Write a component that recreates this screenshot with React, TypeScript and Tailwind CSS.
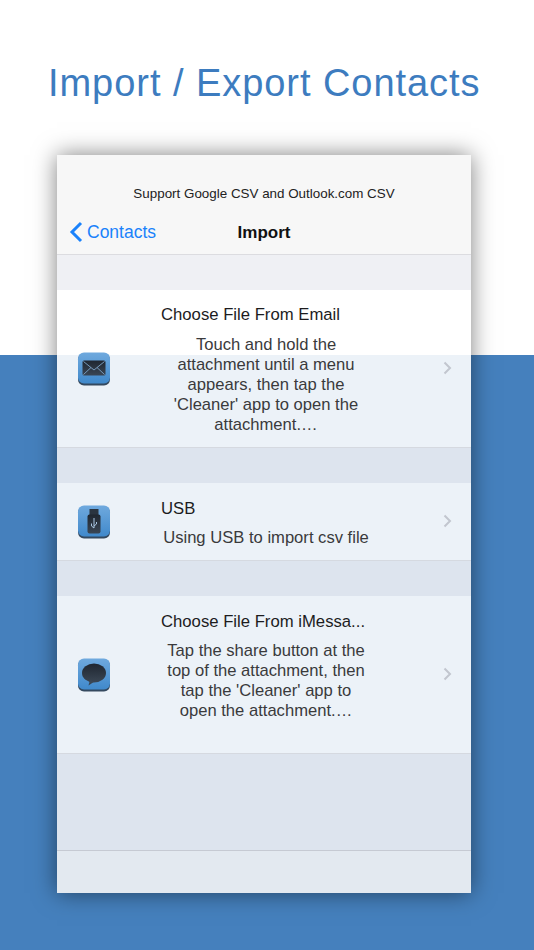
import React from 'react';

const IconTile = ({ children }: { children: React.ReactNode }) => (
  <svg width="34" height="34" viewBox="0 0 34 34" className="shrink-0">
    <defs>
      <linearGradient id="tile" x1="0" y1="0" x2="0" y2="1">
        <stop offset="0" stopColor="#6fa9de" />
        <stop offset="1" stopColor="#4089cb" />
      </linearGradient>
      <linearGradient id="glyph" x1="0" y1="0" x2="0" y2="1">
        <stop offset="0" stopColor="#1f2630" />
        <stop offset="1" stopColor="#3a4654" />
      </linearGradient>
    </defs>
    <rect x="1" y="1.500" width="32" height="32" rx="6" fill="#34495f" />
    <rect x="1" y="0.500" width="32" height="31" rx="6" fill="url(#tile)" />
    {children}
  </svg>
);

const MailIcon = () => (
  <IconTile>
    <rect x="5.500" y="8.500" width="23" height="15" rx="1.500" fill="url(#glyph)" />
    <path d="M6.500 9.500 17 18l10.500-8.500M6.500 22.500l7.500-7M27.500 22.500l-7.500-7" fill="none" stroke="#7fa6c9" strokeWidth="0.900" />
  </IconTile>
);

const UsbIcon = () => (
  <IconTile>
    <rect x="12.500" y="4" width="9" height="6" fill="#2a3440" />
    <rect x="10.500" y="9.500" width="13" height="19" rx="2" fill="url(#glyph)" />
    <path d="M17 13v10M17 23l-2.500-2v-2.500M17 21l2.500-2v-2" fill="none" stroke="#a9c6e2" strokeWidth="1" />
  </IconTile>
);

const ChatIcon = () => (
  <IconTile>
    <ellipse cx="17" cy="15" rx="12" ry="9.500" fill="url(#glyph)" />
    <path d="M13 22l-1.500 5.500 6-4z" fill="#3a4654" />
  </IconTile>
);

const Chevron = () => (
  <svg width="9" height="14" viewBox="0 0 9 14" className="shrink-0 mb-[2px]">
    <path d="M1.500 1.500 7 7l-5.500 5.500" fill="none" stroke="#c2c6cf" strokeWidth="2" />
  </svg>
);

type RowProps = {
  icon: React.ReactNode;
  title: string;
  lines: string[];
  tall?: boolean;
  tight?: boolean;
};

const Row = ({ icon, title, lines, tall, tight }: RowProps) => (
  <div className={`flex items-center bg-white/90 border-b border-[#d5d9e0] pl-[20px] pr-[19px] ${tall ? 'h-[158px]' : 'h-[78px]'}`}>
    <div className="w-[84px] shrink-0">{icon}</div>
    <div className={`flex-1 min-w-0 self-start ${tight ? 'pt-[16px]' : 'pt-[15px]'}`}>
      <div className="text-[16.700px] leading-[20px] text-[#1c1c1e]">{title}</div>
      <div className={`text-[16.600px] leading-[20px] text-[#3a3a3c] text-center w-[210px] ${tight ? 'mt-[9px]' : 'mt-[10px]'}`}>
        {lines.map((line) => (
          <div key={line} className="whitespace-nowrap">{line}</div>
        ))}
      </div>
    </div>
    <Chevron />
  </div>
);

const App: React.FC = () => {
  return (
    <div className="relative w-[534px] h-[950px] flex flex-col overflow-hidden font-['Liberation_Sans',sans-serif]">
      <div className="h-[355px] bg-white px-[48px] pt-[58px]">
        <h1 className="text-[38px] leading-[50px] tracking-[0.950px] whitespace-nowrap text-[#3d7cbf]">
          Import / Export Contacts
        </h1>
      </div>
      <div className="flex-1 bg-[#4580bd]" />

      <div className="absolute left-[57px] top-[155px] w-[414px] h-[738px] flex flex-col shadow-[0_0_22px_rgba(0,0,0,0.5)]">
        <div className="h-[100px] bg-[#f7f7f7] border-b border-[#dcdce0] flex flex-col items-center relative">
          <div className="mt-[30px] text-[13.400px] leading-[17px] text-[#222]">Support Google CSV and Outlook.com CSV</div>
          <div className="mt-[20px] text-[17px] leading-[22px] font-bold text-[#111]">Import</div>
          <div className="absolute left-[12px] top-[66px] flex items-center gap-[4px] text-[#1a82fb] text-[17.500px] leading-[22px]">
            <svg width="14" height="22" viewBox="0 0 14 22">
              <path d="M12 2 3 11l9 9" fill="none" stroke="#1a82fb" strokeWidth="3" />
            </svg>
            <span>Contacts</span>
          </div>
        </div>
        <div className="h-[35px] bg-[#edeef3]/90" />
        <Row
          tall
          icon={<MailIcon />}
          title="Choose File From Email"
          lines={['Touch and hold the', 'attachment until a menu', 'appears, then tap the', "'Cleaner' app to open the", 'attachment.…']}
        />
        <div className="h-[35px] bg-[#edeef3]/90" />
        <Row tight icon={<UsbIcon />} title="USB" lines={['Using USB to import csv file']} />
        <div className="h-[35px] bg-[#edeef3]/90" />
        <Row
          tall
          tight
          icon={<ChatIcon />}
          title="Choose File From iMessa..."
          lines={['Tap the share button at the', 'top of the attachment, then', "tap the 'Cleaner' app to", 'open the attachment.…']}
        />
        <div className="h-[97px] bg-[#edeef3]/90 border-b border-[#c6cad3]" />
        <div className="flex-1 bg-[#f4f4f5]/90" />
      </div>
    </div>
  );
};

export default App;
